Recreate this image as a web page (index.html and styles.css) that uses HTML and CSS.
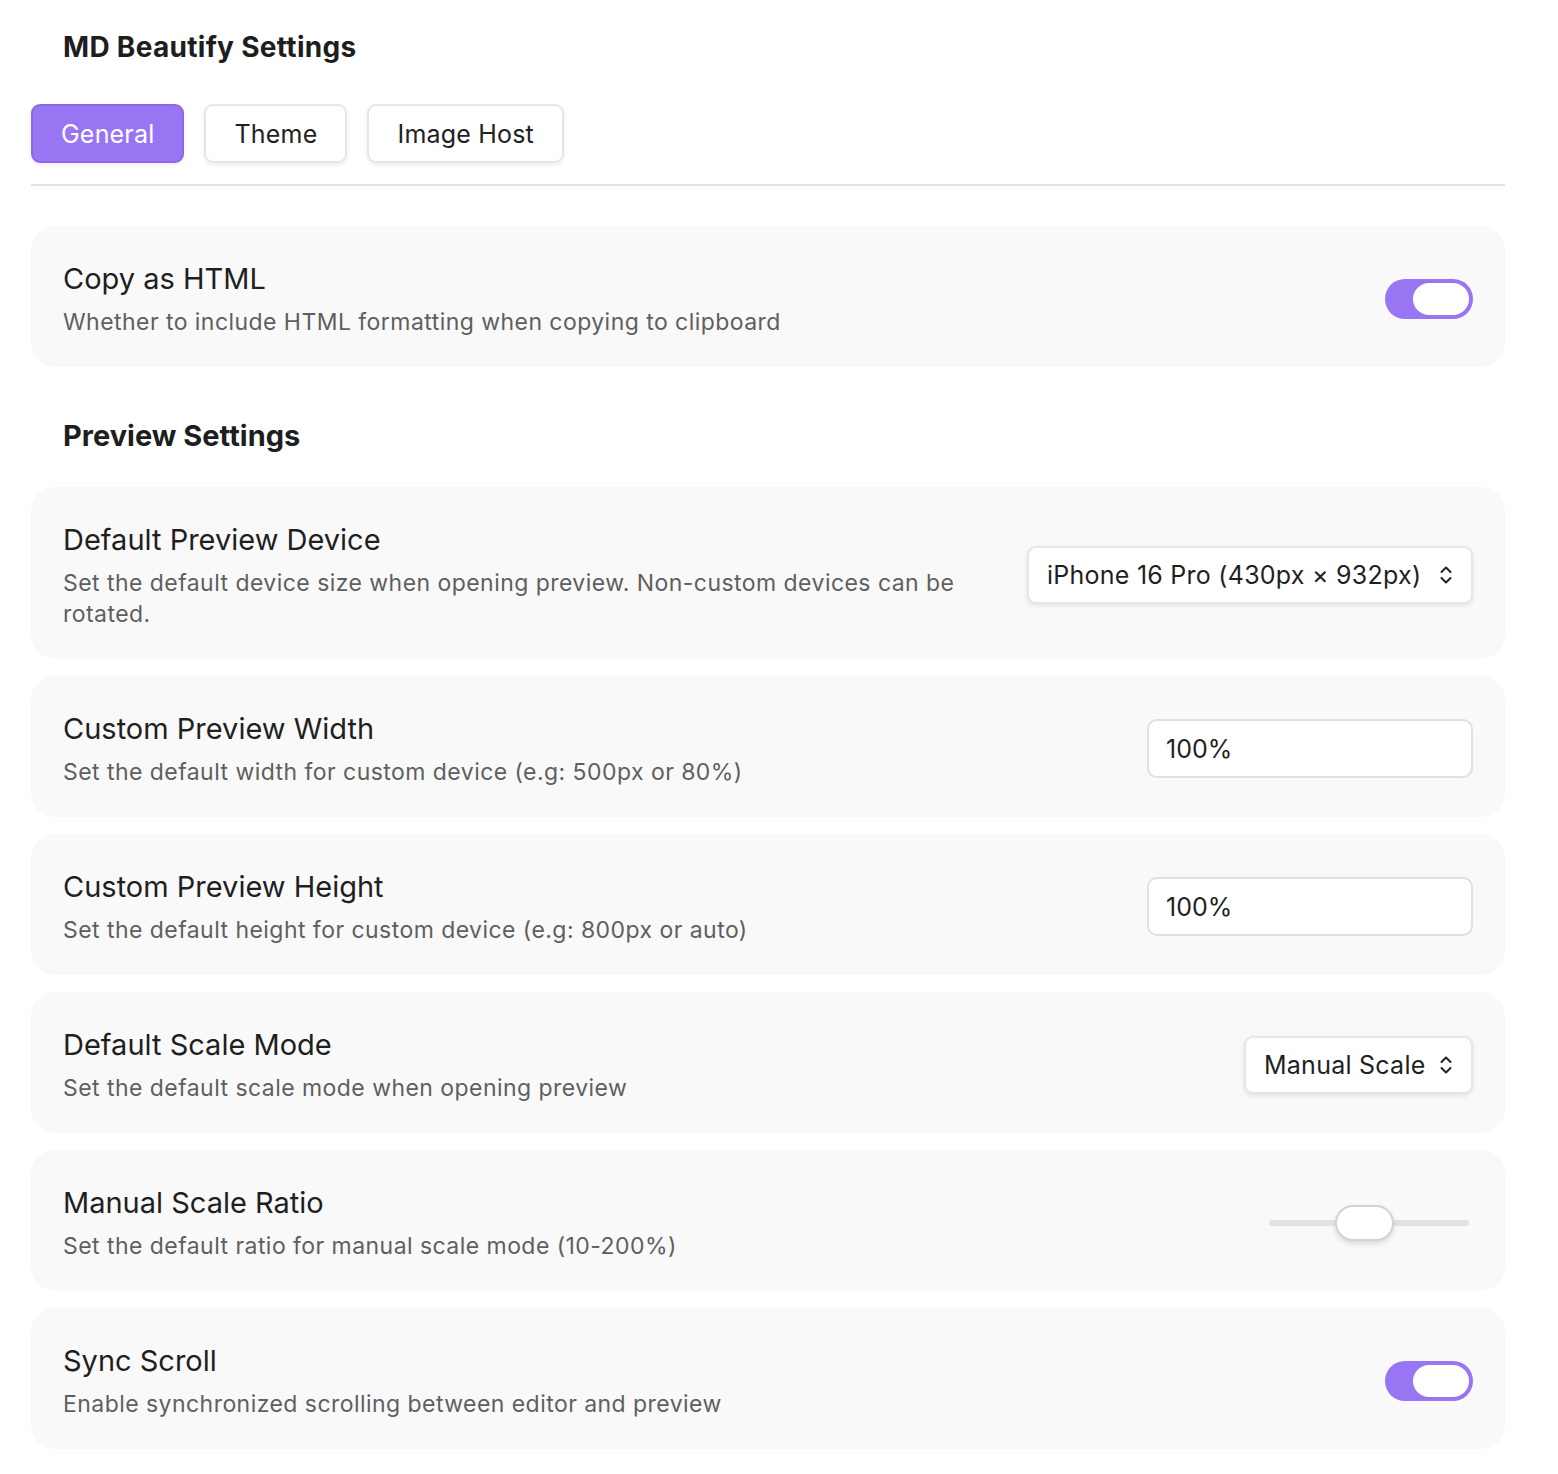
FILE: index.html
```html
<!DOCTYPE html>
<html>
<head>
<meta charset="utf-8">
<link rel="stylesheet" href="styles.css">
</head>
<body>
<div class="page">
  <h1 class="page-title">MD Beautify Settings</h1>
  <nav class="tabs">
    <button class="tab tab-active">General</button>
    <button class="tab">Theme</button>
    <button class="tab">Image Host</button>
  </nav>
  <div class="divider"></div>

  <section class="card">
    <div class="info">
      <div class="name">Copy as HTML</div>
      <div class="desc">Whether to include HTML formatting when copying to clipboard</div>
    </div>
    <div class="toggle on"><div class="knob"></div></div>
  </section>

  <h2 class="section-title">Preview Settings</h2>

  <section class="card">
    <div class="info info-narrow">
      <div class="name">Default Preview Device</div>
      <div class="desc">Set the default device size when opening preview. Non-custom devices can be rotated.</div>
    </div>
    <div class="select select-device">
      <span>iPhone 16 Pro (430px × 932px)</span>
      <svg class="chev" viewBox="0 0 14 22" width="14" height="22"><path d="M2.5 8 L7 3.5 L11.5 8 M2.5 14 L7 18.5 L11.5 14" fill="none" stroke="#222" stroke-width="2" stroke-linecap="round" stroke-linejoin="round"/></svg>
    </div>
  </section>

  <section class="card card-gap">
    <div class="info">
      <div class="name">Custom Preview Width</div>
      <div class="desc">Set the default width for custom device (e.g: 500px or 80%)</div>
    </div>
    <div class="text-input">100%</div>
  </section>

  <section class="card card-gap">
    <div class="info">
      <div class="name">Custom Preview Height</div>
      <div class="desc">Set the default height for custom device (e.g: 800px or auto)</div>
    </div>
    <div class="text-input">100%</div>
  </section>

  <section class="card card-gap">
    <div class="info">
      <div class="name">Default Scale Mode</div>
      <div class="desc">Set the default scale mode when opening preview</div>
    </div>
    <div class="select select-scale">
      <span>Manual Scale</span>
      <svg class="chev" viewBox="0 0 14 22" width="14" height="22"><path d="M2.5 8 L7 3.5 L11.5 8 M2.5 14 L7 18.5 L11.5 14" fill="none" stroke="#222" stroke-width="2" stroke-linecap="round" stroke-linejoin="round"/></svg>
    </div>
  </section>

  <section class="card card-gap">
    <div class="info">
      <div class="name">Manual Scale Ratio</div>
      <div class="desc">Set the default ratio for manual scale mode (10-200%)</div>
    </div>
    <div class="slider">
      <div class="track"></div>
      <div class="thumb" style="left: 70px"></div>
    </div>
  </section>

  <section class="card card-gap">
    <div class="info">
      <div class="name">Sync Scroll</div>
      <div class="desc">Enable synchronized scrolling between editor and preview</div>
    </div>
    <div class="toggle on"><div class="knob"></div></div>
  </section>
</div>
</body>
</html>
```

FILE: styles.css
```css
* { box-sizing: border-box; }
html, body { margin: 0; padding: 0; background: #ffffff; }
body {
  font-family: Inter, "Noto Sans", "Liberation Sans", sans-serif;
  color: #222222;
}
.page {
  width: 1474px;
  margin-left: 31px;
  padding-top: 28px;
  padding-bottom: 22px;
}
.page-title {
  margin: 0 0 0 32px;
  font-size: 28px;
  line-height: 38px;
  font-weight: 700;
  color: #1e1e1e;
  letter-spacing: 0.3px;
}
.tabs {
  display: flex;
  gap: 20px;
  margin-top: 38px;
}
.tab {
  font-family: inherit;
  font-size: 25px;
  height: 59px;
  padding: 0 28px;
  border-radius: 9px;
  border: 2px solid #e6e6e6;
  background: #ffffff;
  color: #222222;
  box-shadow: 0 2px 4px rgba(0,0,0,0.08);
  letter-spacing: 0.2px;
}
.tab-active {
  background: #9875f2;
  border-color: #8c68e6;
  color: #ffffff;
}
.divider {
  height: 2px;
  background: #e3e3e3;
  margin-top: 21px;
  margin-bottom: 40px;
}
.card {
  display: flex;
  align-items: center;
  justify-content: space-between;
  background: #f9f9f9;
  border-radius: 24px;
  padding: 33px 32px 29px 32px;
}
.card-gap { margin-top: 17px; }
.info { flex: 1; min-width: 0; }
.info-narrow { max-width: 920px; }
.name {
  font-size: 29px;
  line-height: 40px;
  color: #1f1f1f;
  letter-spacing: 0px;
}
.desc {
  margin-top: 8px;
  font-size: 23px;
  line-height: 31px;
  color: #5f5f5f;
  letter-spacing: 0.45px;
}
.section-title {
  margin: 51px 0 33px 32px;
  font-size: 29px;
  line-height: 36px;
  font-weight: 700;
  color: #1e1e1e;
}
.toggle {
  width: 88px;
  height: 40px;
  border-radius: 20px;
  background: #9875f2;
  padding: 4px;
  display: flex;
  justify-content: flex-end;
  flex-shrink: 0;
}
.knob {
  width: 56px;
  height: 32px;
  border-radius: 16px;
  background: #ffffff;
}
.select {
  display: flex;
  align-items: center;
  justify-content: space-between;
  height: 58px;
  padding: 0 18px 0 18px;
  background: #ffffff;
  border: 2px solid #e6e6e6;
  border-radius: 9px;
  box-shadow: 0 2px 5px rgba(0,0,0,0.09);
  font-size: 25px;
  color: #1f1f1f;
  flex-shrink: 0;
  letter-spacing: 0.25px;
}
.select-device { width: 446px; margin-left: 40px; }
.select-scale { width: 229px; }
.chev { flex-shrink: 0; }
.text-input {
  width: 326px;
  height: 59px;
  display: flex;
  align-items: center;
  padding: 0 17px;
  background: #ffffff;
  border: 2px solid #e0e0e0;
  border-radius: 10px;
  font-size: 25px;
  color: #1f1f1f;
  flex-shrink: 0;
}
.slider {
  position: relative;
  width: 208px;
  height: 40px;
  flex-shrink: 0;
}
.track {
  position: absolute;
  left: 4px;
  right: 4px;
  top: 17px;
  height: 6px;
  border-radius: 3px;
  background: #e2e2e2;
}
.thumb {
  position: absolute;
  top: 2px;
  width: 59px;
  height: 36px;
  border-radius: 18px;
  background: #ffffff;
  border: 2px solid #d3d3d3;
  box-shadow: 0 3px 5px rgba(0,0,0,0.12);
}
```
